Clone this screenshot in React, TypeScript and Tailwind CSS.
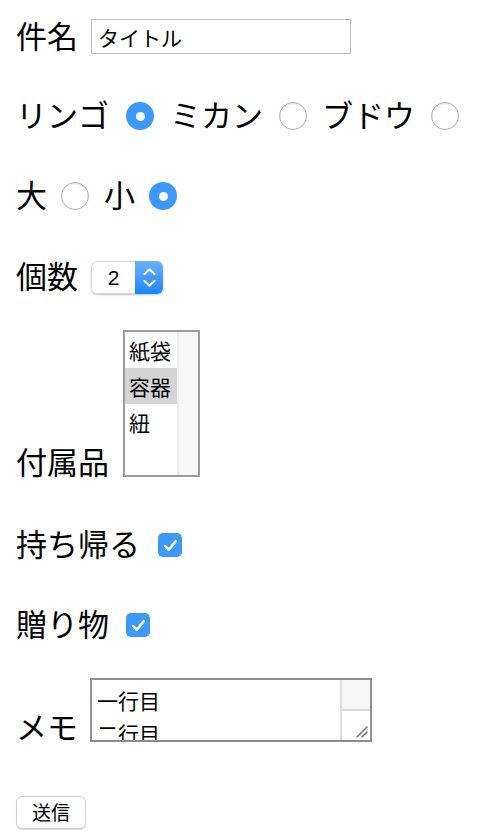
import React from "react";

const font = { fontFamily: '"Noto Sans CJK JP", "Noto Sans", sans-serif' };

function RadioOn({ className = "" }: { className?: string }) {
  return (
    <span
      className={`flex h-[28px] w-[28px] shrink-0 items-center justify-center rounded-full bg-[#3b99fc] ${className}`}
    >
      <span className="h-[9px] w-[9px] rounded-full bg-white" />
    </span>
  );
}

function RadioOff({ className = "" }: { className?: string }) {
  return (
    <span
      className={`h-[28px] w-[28px] shrink-0 rounded-full border border-[#b0b0b0] bg-white shadow-[inset_0_1px_2px_rgba(0,0,0,0.12)] ${className}`}
    />
  );
}

function Check({ className = "" }: { className?: string }) {
  return (
    <span
      className={`flex h-[24px] w-[24px] shrink-0 items-center justify-center rounded-[5px] bg-[#3b99fc] ${className}`}
    >
      <svg width="17" height="17" viewBox="0 0 14 14" fill="none">
        <path
          d="M2.6 7.6 L5.6 10.6 L11.4 3.4"
          stroke="white"
          strokeWidth="2"
          strokeLinecap="round"
          strokeLinejoin="round"
        />
      </svg>
    </span>
  );
}

export default function App() {
  const label = "text-[31px] leading-none text-black whitespace-nowrap";

  return (
    <div className="min-h-[840px] w-[496px] bg-white pl-[16px]" style={font}>
      {/* 件名 */}
      <div className="mt-[19px] flex h-[35px] items-center">
        <span className={`${label} -mt-[4px]`}>件名</span>
        <input
          readOnly
          value="タイトル"
          className="ml-[13px] h-[35px] w-[260px] border border-[#bdbdbd] px-[6px] text-[21px] text-black outline-none"
          style={font}
        />
      </div>

      {/* 果物 */}
      <div className="mt-[48px] flex h-[28px] items-center">
        <span className={`${label} -mt-[5px]`}>リンゴ</span>
        <RadioOn className="ml-[17px]" />
        <span className={`${label} -mt-[5px] ml-[16px]`}>ミカン</span>
        <RadioOff className="ml-[16px]" />
        <span className={`${label} -mt-[5px] ml-[15px]`}>ブドウ</span>
        <RadioOff className="ml-[16px]" />
      </div>

      {/* サイズ */}
      <div className="mt-[52px] flex h-[28px] items-center">
        <span className={`${label} -mt-[5px]`}>大</span>
        <RadioOff className="ml-[14px]" />
        <span className={`${label} -mt-[5px] ml-[15px]`}>小</span>
        <RadioOn className="ml-[14px]" />
      </div>

      {/* 個数 */}
      <div className="mt-[51px] flex h-[33px] items-center">
        <span className={`${label} -mt-[7px]`}>個数</span>
        <div className="ml-[13px] flex h-[33px] w-[72px] overflow-hidden rounded-[6px] shadow-[0_1px_2px_rgba(0,0,0,0.25)]">
          <div
            className="flex flex-1 items-center justify-center rounded-l-[6px] border border-r-0 border-[#d6d6d6] bg-white text-[21px] text-black"
            style={{ fontFamily: '"Liberation Sans", Arial, sans-serif' }}
          >
            2
          </div>
          <div className="flex w-[28px] flex-col items-center justify-center gap-[5px] bg-gradient-to-b from-[#6ab2fb] to-[#1583fb]">
            <svg width="13" height="7" viewBox="0 0 13 7" fill="none">
              <path d="M1.5 6 L6.5 1.2 L11.5 6" stroke="white" strokeWidth="2" strokeLinecap="round" strokeLinejoin="round" />
            </svg>
            <svg width="13" height="7" viewBox="0 0 13 7" fill="none">
              <path d="M1.5 1 L6.5 5.8 L11.5 1" stroke="white" strokeWidth="2" strokeLinecap="round" strokeLinejoin="round" />
            </svg>
          </div>
        </div>
      </div>

      {/* 付属品 */}
      <div className="mt-[36px] flex h-[147px] items-end">
        <span className={`${label} mb-[1px]`}>付属品</span>
        <div className="ml-[14px] flex h-[147px] w-[77px] border-2 border-[#9b9b9b] bg-white">
          <div className="flex w-[52px] flex-col text-[21px] leading-none text-black">
            <div className="flex h-[36px] items-center pl-[4px] pt-[1px]">紙袋</div>
            <div className="flex h-[36px] items-center bg-[#d4d4d4] pl-[4px]">容器</div>
            <div className="flex h-[36px] items-center pl-[4px]">紐</div>
          </div>
          <div className="flex-1 border-l-2 border-[#ececec] bg-[#f7f7f7]" />
        </div>
      </div>

      {/* 持ち帰る */}
      <div className="mt-[56px] flex h-[24px] items-center">
        <span className={`${label} -mt-[6px]`}>持ち帰る</span>
        <Check className="ml-[18px]" />
      </div>

      {/* 贈り物 */}
      <div className="mt-[56px] flex h-[24px] items-center">
        <span className={`${label} -mt-[6px]`}>贈り物</span>
        <Check className="ml-[17px]" />
      </div>

      {/* メモ */}
      <div className="mt-[41px] flex h-[64px] items-end">
        <span className={`${label} mb-[1px]`}>メモ</span>
        <div className="ml-[12px] flex h-[64px] w-[282px] border-2 border-[#8e8e8e] bg-white">
          <div className="flex-1 overflow-hidden pl-[5px] pt-[4px] text-[21px] leading-[33px] text-black">
            <div>一行目</div>
            <div>二行目</div>
          </div>
          <div className="flex w-[30px] flex-col border-l-2 border-[#dcdcdc]">
            <div className="h-[31px] border-b-2 border-[#dcdcdc] bg-[#f6f6f6]" />
            <div className="relative flex-1 bg-white">
              <svg className="absolute bottom-[2px] right-[2px]" width="14" height="14" viewBox="0 0 14 14" fill="none">
                <path d="M3 13 L13 3 M8 13 L13 8" stroke="#7a7a7a" strokeWidth="1.6" strokeLinecap="round" />
              </svg>
            </div>
          </div>
        </div>
      </div>

      {/* 送信 */}
      <div className="mt-[54px] flex">
        <button
          className="flex h-[33px] w-[70px] items-center justify-center rounded-[6px] border border-[#cfcfcf] bg-white text-[19px] text-black shadow-[0_1px_1px_rgba(0,0,0,0.15)]"
          style={font}
        >
          送信
        </button>
      </div>
    </div>
  );
}
